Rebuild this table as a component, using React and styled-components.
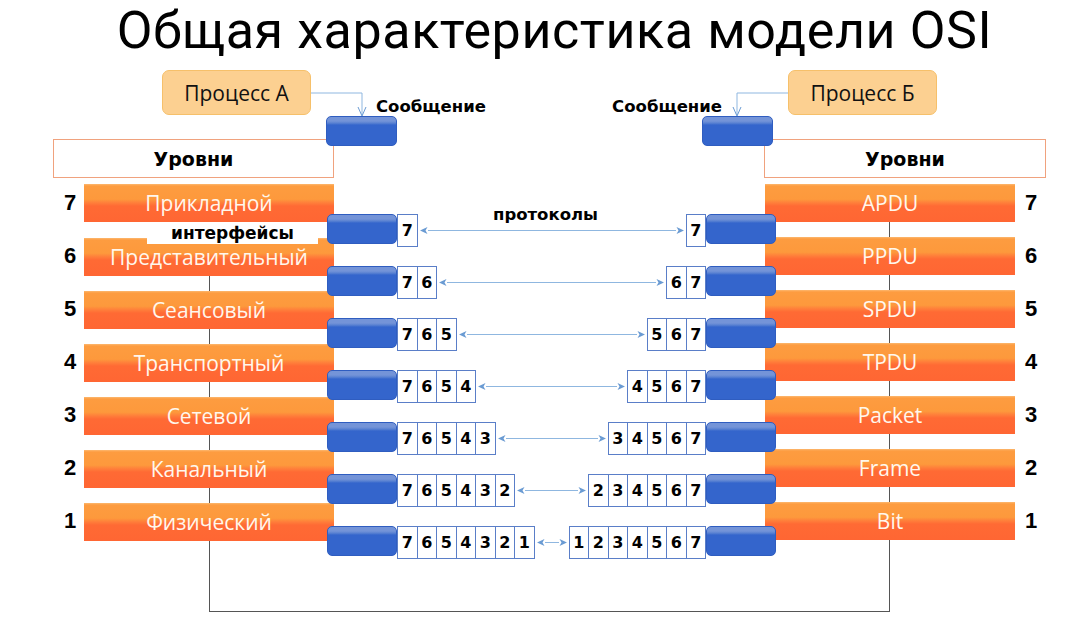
import React from "react";
import styled, { createGlobalStyle } from "styled-components";

const Global = createGlobalStyle`
  html, body { margin: 0; padding: 0; background: #fff; }
  body { width: 1089px; height: 640px; overflow: hidden; font-family: "Liberation Sans", Arial, sans-serif; }
`;

const Page = styled.div`
  width: 1089px;
  height: 640px;
`;

const Title = styled.h1`
  margin: 0;
  height: 70px;
  box-sizing: border-box;
  padding-left: 20px;
  font-family: Roboto, "Open Sans", sans-serif;
  font-weight: 400;
  font-size: 52px;
  line-height: 61px;
  letter-spacing: 0.6px;
  text-align: center;
  color: #000;
  white-space: nowrap;
`;

const Header = styled.div`
  display: grid;
  grid-template-columns: 53px 109px 149px 15px 8px 63px 305px 62px 9px 15px 149px 109px 43px;
  grid-template-rows: 46px 23px 7px 32px 6px;
`;

const ProcessBox = styled.div`
  grid-column: ${(p) => p.$col};
  grid-row: 1;
  height: 45px;
  box-sizing: border-box;
  background: #fcd091;
  border: 1px solid #f6c06a;
  border-radius: 7px;
  display: flex;
  align-items: center;
  justify-content: center;
  font-family: "Open Sans", "Noto Sans", sans-serif;
  font-size: 21px;
  color: #111;
`;

const MsgLabel = styled.div`
  grid-column: ${(p) => p.$col};
  grid-row: 1;
  align-self: end;
  justify-self: ${(p) => (p.$right ? "end" : "start")};
  margin: ${(p) => (p.$right ? "0 42px 0 0" : "0 0 0 42px")};
  font-family: "DejaVu Sans", Verdana, sans-serif;
  font-weight: 700;
  font-size: 16.5px;
  line-height: 18px;
  color: #000;
  white-space: nowrap;
  z-index: 2;
`;

const Connector = styled.svg`
  grid-column: ${(p) => p.$col};
  grid-row: 1;
  width: 86px;
  height: 46px;
  overflow: visible;
  z-index: 3;
`;

const BlueBlock = styled.div`
  width: 70px;
  height: 30px;
  flex-shrink: 0;
  box-sizing: border-box;
  border: 1px solid #2f5dc0;
  border-radius: 5px;
  background: linear-gradient(to bottom, #7494d8 0, #7494d8 4px, #5a82d2 6px, #3465cc 8px, #3465cc 100%);
`;

const MsgBlock = styled(BlueBlock)`
  grid-column: ${(p) => p.$col};
  grid-row: 2 / 4;
  width: auto;
  z-index: 2;
`;

const LevelsBox = styled.div`
  grid-column: ${(p) => p.$col};
  grid-row: 3 / 5;
  box-sizing: border-box;
  border: 1px solid #f0a27e;
  background: #fff;
  display: flex;
  align-items: center;
  justify-content: center;
  font-family: "DejaVu Sans", Verdana, sans-serif;
  font-weight: 700;
  font-size: 19px;
  color: #000;
  z-index: 1;
`;

const Layers = styled.div`
  display: flex;
  align-items: stretch;
`;

const NumCol = styled.div`
  width: ${(p) => p.$w}px;
  flex-shrink: 0;
  box-sizing: border-box;
  padding: ${(p) => p.$pad};
  display: flex;
  flex-direction: column;
  gap: 15px;
`;

const Num = styled.div`
  height: 38px;
  display: flex;
  align-items: center;
  justify-content: center;
  font-family: "Liberation Sans", Arial, sans-serif;
  font-weight: 700;
  font-size: 22px;
  color: #000;
`;

const BarCol = styled.div`
  width: 250px;
  flex-shrink: 0;
  display: flex;
  flex-direction: column;
  background: linear-gradient(#555, #555) no-repeat ${(p) => p.$lineX}px 38px / 1px 100%;
`;

const Bar = styled.div`
  height: 38px;
  flex-shrink: 0;
  box-sizing: border-box;
  display: flex;
  align-items: center;
  justify-content: center;
  background: linear-gradient(
    to bottom,
    #fcb870 0,
    #fd9c40 2px,
    #fd993c 40%,
    #ff7d3a 50%,
    #ff6a34 58%,
    #ff6633 100%
  );
  font-family: "Open Sans", "Noto Sans", sans-serif;
  font-size: 21px;
  color: #fff7ec;
  white-space: nowrap;
  &:not(:first-child) {
    margin-top: 15px;
  }
`;

const IfaceLabel = styled.div`
  height: 22px;
  margin: 0 16px -21px 63px;
  background: #fff;
  display: flex;
  align-items: center;
  justify-content: center;
  font-family: "DejaVu Sans", Verdana, sans-serif;
  font-weight: 700;
  font-size: 17px;
  color: #000;
  z-index: 2;
`;

const Middle = styled.div`
  flex: 1;
  margin: 0 -11px 0 -7px;
  padding-top: 30px;
  display: flex;
  flex-direction: column;
  gap: 19px;
  z-index: 1;
`;

const StackRow = styled.div`
  display: flex;
  align-items: flex-start;
  height: 33px;
`;

const Cells = styled.div`
  display: flex;
  flex-shrink: 0;
`;

const Cell = styled.div`
  width: 20.5px;
  height: 33px;
  box-sizing: border-box;
  border: 1px solid #5a7ec8;
  background: #fff;
  display: flex;
  align-items: center;
  justify-content: center;
  font-family: "DejaVu Sans", Verdana, sans-serif;
  font-weight: 700;
  font-size: 16px;
  color: #000;
  & + & {
    margin-left: -1px;
  }
`;

const Arrow = styled.div`
  flex: 1;
  height: 33px;
  padding: 0 2px;
  display: flex;
  align-items: center;
  position: relative;
`;

const ArrowLine = styled.div`
  flex: 1;
  height: 1px;
  background: #8fb7e0;
`;

const ArrowText = styled.div`
  position: absolute;
  top: -8px;
  left: 0;
  right: 0;
  text-align: center;
  font-family: "DejaVu Sans", Verdana, sans-serif;
  font-weight: 700;
  font-size: 16.5px;
  line-height: 18px;
  color: #000;
  padding-right: 12px;
`;

const Bus = styled.div`
  margin-left: 209px;
  width: 681px;
  height: 53px;
  box-sizing: border-box;
  border: 1px solid #555;
  border-top: none;
`;

const Head = ({ dir }) => (
  <svg width="8" height="9" viewBox="0 0 8 9" style={{ flexShrink: 0 }}>
    {dir === "left" ? (
      <path d="M0 4.5 L7.5 1 L5.5 4.5 L7.5 8 Z" fill="#6a9bd3" />
    ) : (
      <path d="M8 4.5 L0.5 1 L2.5 4.5 L0.5 8 Z" fill="#6a9bd3" />
    )}
  </svg>
);

const levels = [
  { n: 7, name: "Прикладной", pdu: "APDU" },
  { n: 6, name: "Представительный", pdu: "PPDU" },
  { n: 5, name: "Сеансовый", pdu: "SPDU" },
  { n: 4, name: "Транспортный", pdu: "TPDU" },
  { n: 3, name: "Сетевой", pdu: "Packet" },
  { n: 2, name: "Канальный", pdu: "Frame" },
  { n: 1, name: "Физический", pdu: "Bit" },
];

const range = (from, to) => {
  const out = [];
  if (from >= to) for (let i = from; i >= to; i--) out.push(i);
  else for (let i = from; i <= to; i++) out.push(i);
  return out;
};

export default function App() {
  return (
    <Page>
      <Global />
      <Title>Общая характеристика модели OSI</Title>

      <Header>
        <ProcessBox $col="3">Процесс А</ProcessBox>
        <Connector $col="4 / 7" viewBox="0 0 86 46">
          <path d="M0 23 H51 V45" fill="none" stroke="#8fb7e0" strokeWidth="1" />
          <path d="M47 37 L51 46 L55 37" fill="none" stroke="#6a9bd3" strokeWidth="1" />
        </Connector>
        <MsgLabel $col="6 / 8">Сообщение</MsgLabel>
        <MsgBlock $col="5 / 7" />
        <LevelsBox $col="2 / 6">Уровни</LevelsBox>

        <ProcessBox $col="11">Процесс Б</ProcessBox>
        <Connector $col="8 / 11" viewBox="0 0 86 46">
          <path d="M86 23 H35 V45" fill="none" stroke="#8fb7e0" strokeWidth="1" />
          <path d="M31 37 L35 46 L39 37" fill="none" stroke="#6a9bd3" strokeWidth="1" />
        </Connector>
        <MsgLabel $col="7 / 9" $right>Сообщение</MsgLabel>
        <MsgBlock $col="8 / 10" />
        <LevelsBox $col="9 / 13">Уровни</LevelsBox>
      </Header>

      <Layers>
        <NumCol $w={84} $pad="0 0 0 56px">
          {levels.map((l) => (
            <Num key={l.n}>{l.n}</Num>
          ))}
        </NumCol>

        <BarCol $lineX={125}>
          {levels.map((l, i) => (
            <React.Fragment key={l.n}>
              <Bar>{l.name}</Bar>
              {i === 0 && <IfaceLabel>интерфейсы</IfaceLabel>}
            </React.Fragment>
          ))}
        </BarCol>

        <Middle>
          {levels.map((l, i) => (
            <StackRow key={l.n}>
              <BlueBlock />
              <Cells>
                {range(7, l.n).map((d) => (
                  <Cell key={d}>{d}</Cell>
                ))}
              </Cells>
              <Arrow>
                {i === 0 && <ArrowText>протоколы</ArrowText>}
                <Head dir="left" />
                <ArrowLine />
                <Head dir="right" />
              </Arrow>
              <Cells>
                {range(l.n, 7).map((d) => (
                  <Cell key={d}>{d}</Cell>
                ))}
              </Cells>
              <BlueBlock />
            </StackRow>
          ))}
        </Middle>

        <BarCol $lineX={124}>
          {levels.map((l) => (
            <Bar key={l.n}>{l.pdu}</Bar>
          ))}
        </BarCol>

        <NumCol $w={74} $pad="0 42px 0 0">
          {levels.map((l) => (
            <Num key={l.n}>{l.n}</Num>
          ))}
        </NumCol>
      </Layers>

      <Bus />
    </Page>
  );
}
